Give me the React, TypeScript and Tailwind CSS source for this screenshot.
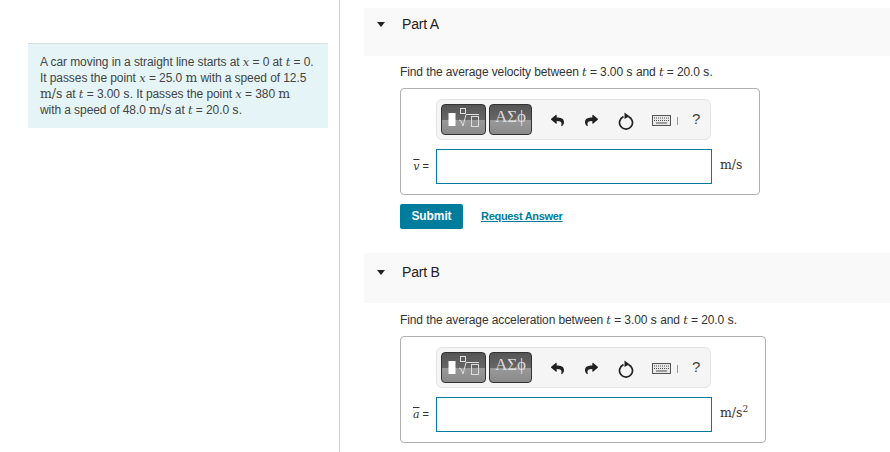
import { ReactNode } from 'react';
import { FaReply, FaShare } from 'react-icons/fa';

const M = ({ children }: { children: ReactNode }) => (
    <span className="font-['DejaVu_Serif',serif] text-[12.5px] tracking-normal">{children}</span>
);

const V = ({ children }: { children: ReactNode }) => (
    <span className="font-['DejaVu_Serif',serif] italic text-[11.5px] tracking-normal">{children}</span>
);

const Templates = () => (
    <div className="w-[45px] h-[31px] rounded-[4px] border border-[#333] bg-[linear-gradient(#555_0,#666_50%,#999_52%,#8a8a8a_100%)] flex items-center justify-center">
        <svg width="38" height="25" viewBox="0 0 38 25" fill="none">
            <rect x="3.5" y="6" width="7" height="13" fill="#fff" />
            <rect x="15.5" y="1.5" width="5" height="5" stroke="#ddd" />
            <path d="M14 13l2 1 2 5 3-11.5h13" stroke="#ddd" />
            <rect x="26.5" y="9.5" width="7" height="10" stroke="#ddd" />
        </svg>
    </div>
);

const Symbols = () => (
    <div className="w-[43px] h-[31px] rounded-[4px] border border-[#333] bg-[linear-gradient(#555_0,#666_50%,#999_52%,#8a8a8a_100%)] flex items-center justify-center pb-[5px] font-['Liberation_Serif',serif] text-[17px] text-[#ddd]">
        ΑΣϕ
    </div>
);

const Keyboard = () => (
    <svg width="19" height="11" viewBox="0 0 19 11">
        <rect x="0.5" y="0.5" width="18" height="10" fill="#e8e8e8" stroke="#555" />
        <path d="M2 3h15M2 5.5h15" stroke="#555" strokeDasharray="1 1" />
        <path d="M4 8h11" stroke="#555" />
    </svg>
);

const Reset = () => (
    <svg width="16" height="18" viewBox="0 0 16 18" fill="none">
        <path d="M5.5 4.6a6.5 6.5 0 1 0 5 0" stroke="#222" strokeWidth="1.7" />
        <path d="M6.5 0.5l5 3.8-5 2.7z" fill="#222" />
    </svg>
);

const Toolbar = () => (
    <div className="ml-[35px] w-[275px] h-[41px] rounded-[6px] border border-[#e4e4e4] bg-[#f5f5f5] flex items-center pl-[4px]">
        <Templates />
        <div className="ml-[3px]">
            <Symbols />
        </div>
        <FaReply className="ml-[19px] mt-[2px] w-[13px] h-[13px] text-[#222]" />
        <FaShare className="ml-[21px] mt-[2px] w-[13px] h-[13px] text-[#222]" />
        <div className="ml-[20px] mt-[2px]">
            <Reset />
        </div>
        <div className="ml-[18px] mt-[2px] flex">
            <Keyboard />
        </div>
        <div className="ml-[6px] mt-[2px] w-px h-[8px] bg-[#999]" />
        <span className="ml-[14px] text-[15px] text-[#444]">?</span>
    </div>
);

type PartProps = {
    name: string;
    headerClass: string;
    questionClass: string;
    boxClass: string;
    question: string;
    symbol: string;
    unit: ReactNode;
    children?: ReactNode;
};

const Part = ({ name, headerClass, questionClass, boxClass, question, symbol, unit, children }: PartProps) => (
    <section>
        <div className={`${headerClass} bg-[#f9f9f9] flex items-start pl-[13px]`}>
            <span className="mt-[7px] w-0 h-0 border-x-[4.5px] border-x-transparent border-t-[5px] border-t-[#222]" />
            <h2 className="ml-[17px] text-[14px] leading-[18px] text-[#222] tracking-[-0.2px]">{name}</h2>
        </div>
        <div className="pl-[36px] w-[402px]">
            <p className={`${questionClass} text-[12px] leading-[15px] text-[#333] whitespace-nowrap tracking-[-0.1px]`}>
                Find the average {question} between <V>t</V> = 3.00 <M>s</M> and <V>t</V> = 20.0 <M>s</M>.
            </p>
            <div className={`${boxClass} mt-[8px] h-[107px] rounded-[4px] border border-[#b0b0b0] pt-[10px] bg-white`}>
                <Toolbar />
                <div className="mt-[9px] flex items-center">
                    <span className="w-[35px] text-right pr-[7px] text-[11px] text-[#333] whitespace-nowrap">
                        <span className="font-['DejaVu_Serif',serif] italic text-[11px] overline">{symbol}</span> =
                    </span>
                    <div className="w-[276px] h-[35px] border border-[#007c9c] bg-white" />
                    <span className="ml-[8px] mb-[5px] text-[#333] leading-[18px]">{unit}</span>
                </div>
            </div>
            {children}
        </div>
    </section>
);

export default function App() {
    return (
        <div className="w-[890px] h-[452px] overflow-hidden bg-white flex font-['Liberation_Sans',Arial,sans-serif]">
            <aside className="w-[340px] shrink-0 h-full border-r border-[#d0d0d0] pl-[28px] pr-[11px] pt-[43px]">
                <div className="w-[300px] h-[85px] border-t border-[#d8dfe2] bg-[#e5f5f7] pl-[12px] pt-[11px] text-[12px] leading-[15px] text-[#444] whitespace-nowrap tracking-[-0.08px]">
                    A car moving in a straight line starts at <V>x</V> = 0 at <V>t</V> = 0.
                    <br />
                    It passes the point <V>x</V> = 25.0 <M>m</M> with a speed of 12.5
                    <br />
                    <M>m/s</M> at <V>t</V> = 3.00 <M>s</M>. It passes the point <V>x</V> = 380 <M>m</M>
                    <br />
                    with a speed of 48.0 <M>m/s</M> at <V>t</V> = 20.0 <M>s</M>.
                </div>
            </aside>
            <main className="flex-1 pt-[8px] pl-[24px]">
                <Part
                    name="Part A"
                    headerClass="h-[48px] pt-[7px]"
                    questionClass="mt-[8px]"
                    boxClass="w-[360px]"
                    question="velocity"
                    symbol="v"
                    unit={<M>m/s</M>}
                >
                    <div className="mt-[9px] flex items-center">
                        <button className="w-[63px] h-[25px] rounded-[2px] bg-[#007c9c] pb-[2px] text-white text-[12px] font-bold tracking-[-0.1px]">
                            Submit
                        </button>
                        <a className="ml-[18px] text-[11px] font-bold text-[#007c9c] underline tracking-[-0.3px]">Request Answer</a>
                    </div>
                </Part>
                <div className="mt-[24px]">
                    <Part
                        name="Part B"
                        headerClass="h-[50px] pt-[10px]"
                        questionClass="mt-[9px]"
                        boxClass="w-[366px]"
                        question="acceleration"
                        symbol="a"
                        unit={
                            <M>
                                m/s<sup className="text-[9px]">2</sup>
                            </M>
                        }
                    />
                </div>
            </main>
        </div>
    );
}
